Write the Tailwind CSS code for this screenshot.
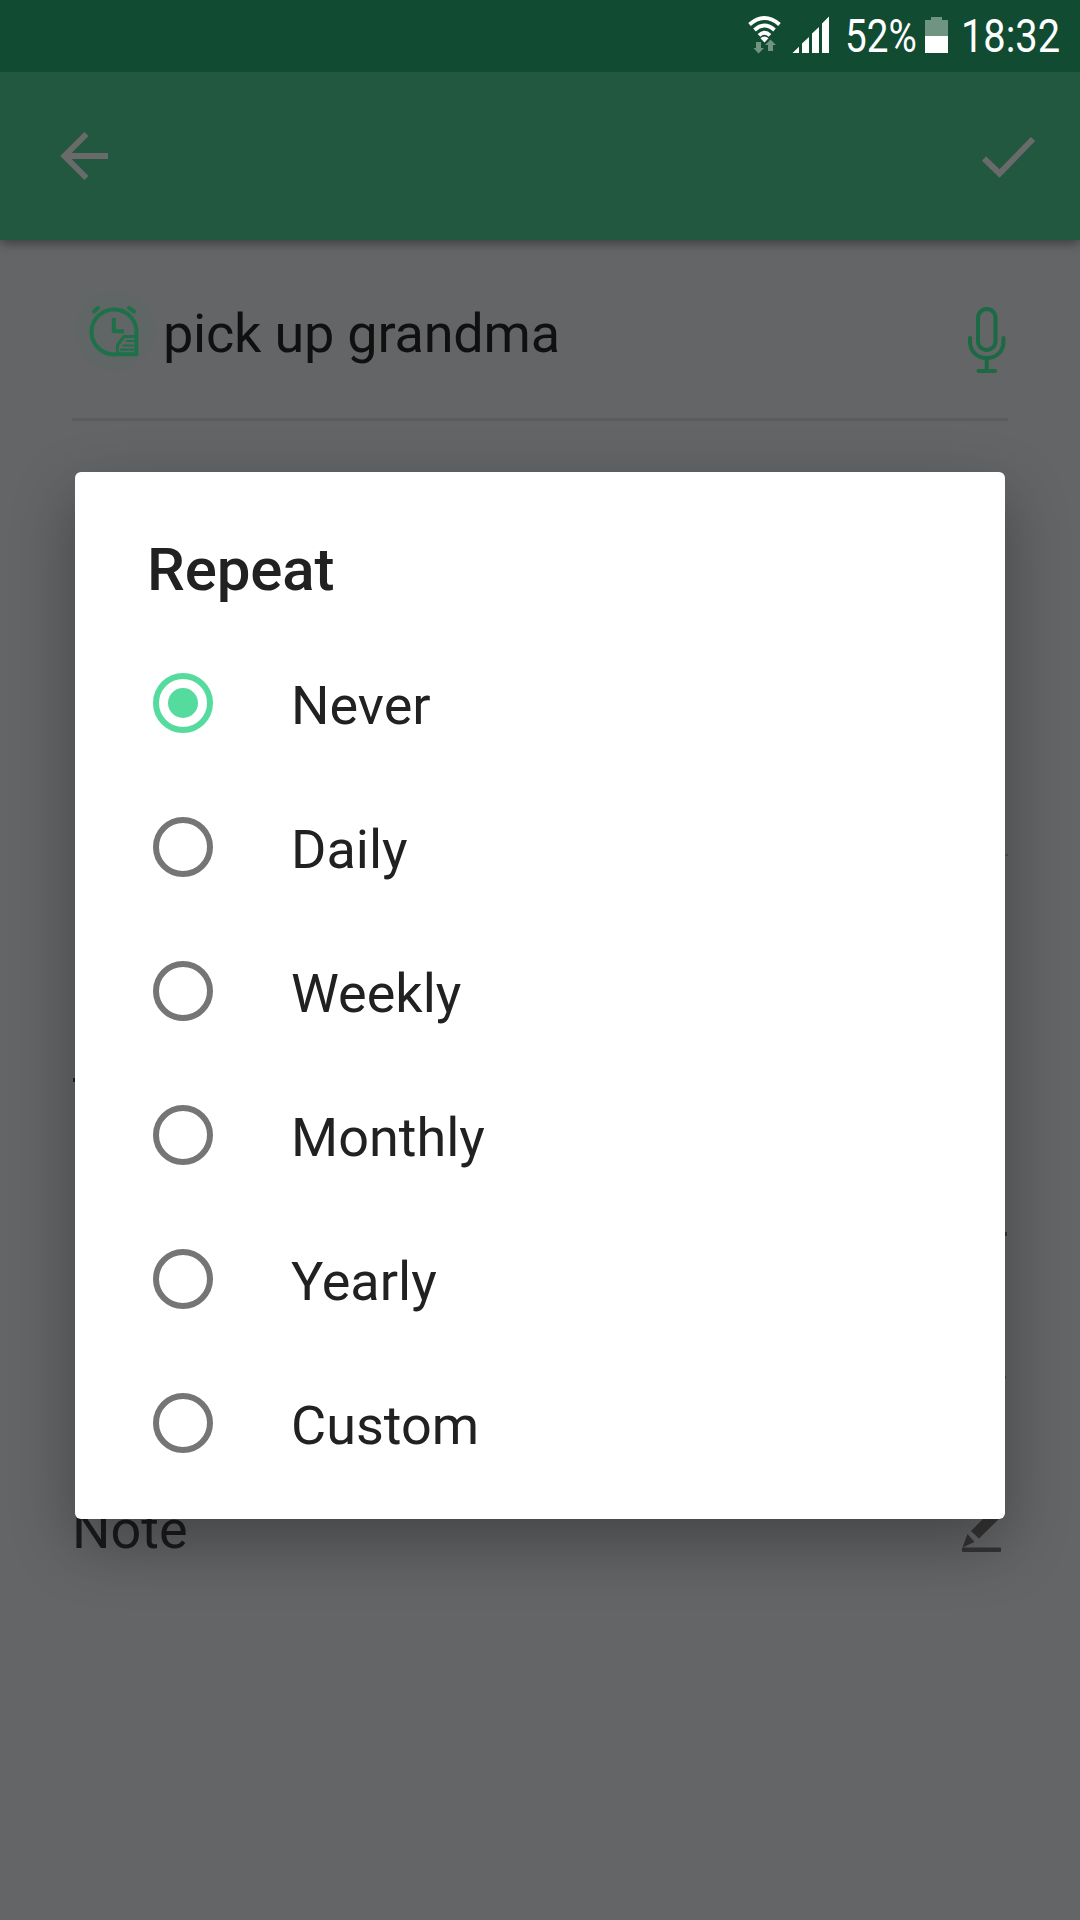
<!DOCTYPE html>
<html lang="en">
<head>
<meta charset="utf-8">
<title>Repeat</title>
<script src="https://cdn.jsdelivr.net/npm/@tailwindcss/browser@4"></script>
</head>
<body class="relative flex h-[1920px] w-[1080px] flex-col overflow-hidden bg-[#646567] font-[Roboto,sans-serif] text-[54px] leading-[64px] text-[#212121]">
  <header class="z-10 flex h-[72px] shrink-0 bg-[#114c32] pl-[748px] text-[46px] leading-[73px] text-white">
    <svg class="h-[72px] w-[86px] shrink-0" viewBox="748 0 86 72" fill="none">
      <g stroke="#fff" stroke-width="3.8">
        <path d="M749.5 24.5Q764.500 11.500 779.500 24.500"/>
        <path d="M754.500 30Q764.500 21 774.500 30"/>
        <path d="M759 35.300Q764.500 30 770 35.300"/>
      </g>
      <path d="M760.500 38.300Q764.500 34.800 768.500 38.300L764.500 42.500Z" fill="#fff"/>
      <path d="M756 42h5v6h3l-5.500 5.500L753.500 48h2.500ZM768 51v-6h-3l5.500-5.500L776 45h-3v6Z" fill="#6f9582"/>
      <path d="M792.500 53L799 46.700V53ZM802 53V43.500L809 37V53ZM812 53V33.500L819 27V53ZM822 53V23.500L829 16.500V53Z" fill="#fff"/>
    </svg>
    <div class="w-[91px] shrink-0 pl-[11px]"><span class="inline-block origin-left scale-x-[0.84]">52%</span></div>
    <svg class="h-[72px] w-[24px] shrink-0" viewBox="925 0 24 72">
      <path d="M925 20h6v-3h11v3h6v16h-23Z" fill="#709482"/><path d="M925 36h23v17h-23Z" fill="#fff"/>
    </svg>
    <div class="w-[100px] shrink-0 pl-[12px]"><span class="inline-block origin-left scale-x-[0.865]">18:32</span></div>
  </header>
  <nav class="flex h-[168px] shrink-0 items-center justify-between bg-[#225840] pr-[44px] pl-[60px] shadow-[0_3px_10px_rgba(0,0,0,0.4)]">
    <svg class="h-[50px] w-[50px]" viewBox="60 131 50 50" fill="none" stroke="#686b69" stroke-width="6"><path d="M86.500 134L64.500 156L86.500 178M64.500 156H108"/></svg>
    <svg class="h-[50px] w-[56px]" viewBox="980 131 56 50" fill="none" stroke="#686b69" stroke-width="6"><path d="M984 158.500L999.500 173.500L1033 139"/></svg>
  </nav>
  <main class="flex flex-1 flex-col px-[72px]">
    <section class="flex h-[181px] items-start border-b-[3px] border-[#5b5c5e] pt-[44px]">
      <svg class="h-[90px] w-[90px] shrink-0" viewBox="72 284 90 90" fill="none" stroke="#1d7149" stroke-linecap="round" stroke-linejoin="round">
        <circle cx="115" cy="331" r="40" fill="#606566" stroke="none"/>
        <path stroke-width="4" d="M116 354.300A22.500 22.500 0 1 1 136.300 335V354.300Z"/>
        <path stroke-width="4" stroke-linecap="butt" d="M113.800 318V331.300H124"/>
        <path stroke-width="4" d="M94 311.500L98 308M129 308L134 311.500"/>
        <path stroke-width="3" d="M117.500 353V345L124 336.500H136"/>
        <path stroke-width="2.200" d="M127 341H133M123.500 345.500H133M121 349.700H133"/>
      </svg>
      <div class="flex-1 pt-[18px] pl-px tracking-[-0.2px] text-[#101011]">pick up grandma</div>
      <svg class="mt-[20px] h-[70px] w-[42px] shrink-0" viewBox="966 304 42 70" fill="none" stroke="#1b6945" stroke-width="4" stroke-linecap="round">
        <rect x="978" y="309" width="17.500" height="41" rx="8.750"/>
        <path d="M970 338V341.500C970 351 977 358 986.750 358S1003.500 351 1003.500 341.500V338M986.750 358V371M978.500 371H995"/>
      </svg>
    </section>
    <section class="mt-[1077px] flex items-start justify-between">
      <div class="text-[#1b1b1c]">Note</div>
      <svg class="mr-[6px] h-[64px] w-[42px]" viewBox="960 1498 42 64" fill="#343435">
        <path d="M971 1531L998 1504L1006 1512L979 1538.500ZM967.500 1534L974.500 1542L962.500 1547.500Z"/>
        <rect x="962" y="1547.500" width="39" height="4.500" rx="1"/>
      </svg>
    </section>
  </main>

  <!-- edges of controls that stick out from behind the dialog -->
  <i class="absolute top-[1078px] left-[73px] h-[4px] w-[3px] bg-[#222223]"></i>
  <i class="absolute top-[1232px] left-[1003px] h-[4px] w-[4px] bg-[#333334]"></i>
  <i class="absolute top-[1376px] left-[1003px] h-[3px] w-[3px] bg-[#444445]"></i>
  <i class="absolute top-[854px] left-[1003px] h-[2px] w-[5px] bg-[#515253]"></i>

  <div role="dialog" class="absolute top-[472px] left-[75px] flex h-[1047px] w-[930px] flex-col rounded-[6px] bg-white shadow-[0_24px_64px_rgba(0,0,0,0.32)]">
    <h1 class="h-[159px] pt-[63px] pl-[72px] text-[60px] leading-[70px] font-medium tracking-[-0.1px]">Repeat</h1>
    <ul class="flex flex-col">
      <li class="flex h-[144px] items-center pl-[78px]"><span class="flex size-[60px] items-center justify-center rounded-full border-[6px] border-[#54db9d]"><span class="size-[30px] rounded-full bg-[#54db9d]"></span></span><span class="pt-[6px] pl-[78px]">Never</span></li>
      <li class="flex h-[144px] items-center pl-[78px]"><span class="size-[60px] rounded-full border-[6px] border-[#757575]"></span><span class="pt-[6px] pl-[78px]">Daily</span></li>
      <li class="flex h-[144px] items-center pl-[78px]"><span class="size-[60px] rounded-full border-[6px] border-[#757575]"></span><span class="pt-[6px] pl-[78px]">Weekly</span></li>
      <li class="flex h-[144px] items-center pl-[78px]"><span class="size-[60px] rounded-full border-[6px] border-[#757575]"></span><span class="pt-[6px] pl-[78px]">Monthly</span></li>
      <li class="flex h-[144px] items-center pl-[78px]"><span class="size-[60px] rounded-full border-[6px] border-[#757575]"></span><span class="pt-[6px] pl-[78px]">Yearly</span></li>
      <li class="flex h-[144px] items-center pl-[78px]"><span class="size-[60px] rounded-full border-[6px] border-[#757575]"></span><span class="pt-[6px] pl-[78px]">Custom</span></li>
    </ul>
  </div>
</body>
</html>
